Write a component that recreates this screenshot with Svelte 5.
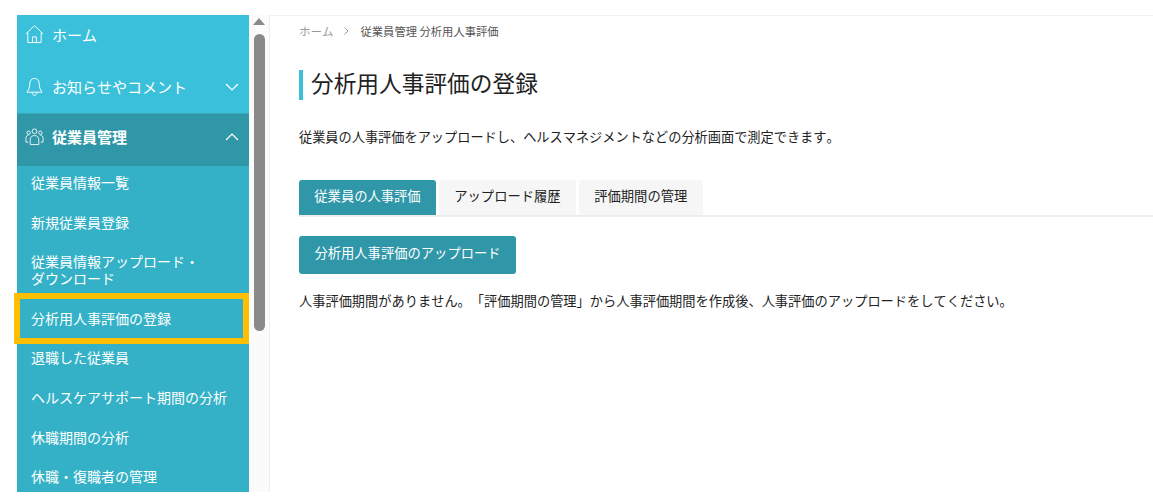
<script>
  const subItems = [
    { label: '従業員情報一覧' },
    { label: '新規従業員登録' },
    { label: '従業員情報アップロード・\nダウンロード' },
    { label: '分析用人事評価の登録', marked: true },
    { label: '退職した従業員' },
    { label: 'ヘルスケアサポート期間の分析' },
    { label: '休職期間の分析' },
    { label: '休職・復職者の管理' }
  ]
  const tabs = ['従業員の人事評価', 'アップロード履歴', '評価期間の管理']
</script>

<div class="page">
  <nav class="sidebar">
    <a class="top home">
      <svg class="icon" viewBox="0 0 20 20" fill="none" stroke="currentColor" stroke-width="1">
        <path d="M1 9.500 8.800 1.600q1.200-1.100 2.400 0L19 9.500M3 8v10.500h14V8M8 18.500v-6h4v6" />
      </svg>
      <span>ホーム</span>
    </a>
    <a class="top notice">
      <svg class="icon" viewBox="0 0 20 20" fill="none" stroke="currentColor" stroke-width="1">
        <path d="M10 1.500c-3.500 0-5 2.800-5 6 0 4-1.500 6.500-3 8.500h16c-1.500-2-3-4.500-3-8.500 0-3.200-1.500-6-5-6zM7.500 16c0 2 1 3.200 2.500 3.200s2.500-1.200 2.500-3.200" />
      </svg>
      <span>お知らせやコメント</span>
      <svg class="chev" viewBox="0 0 14 8" fill="none" stroke="currentColor" stroke-width="1.200"><path d="M1 1l6 6 6-6" /></svg>
    </a>
    <a class="top current">
      <svg class="icon" viewBox="0 0 20 20" fill="none" stroke="currentColor" stroke-width="0.900">
        <circle cx="10" cy="4.500" r="2.500" /><circle cx="3.800" cy="6" r="1.800" /><circle cx="16.200" cy="6" r="1.800" />
        <path d="M5.500 18.500V13c0-2.500 2-4 4.500-4s4.500 1.500 4.500 4v5.500zM3.500 16H1v-4c0-2 1-3.500 3-3.500M16.500 16H19v-4c0-2-1-3.500-3-3.500" />
      </svg>
      <span>従業員管理</span>
      <svg class="chev" viewBox="0 0 14 8" fill="none" stroke="currentColor" stroke-width="1.200"><path d="M1 7l6-6 6 6" /></svg>
    </a>
    <ul class="sub">
      {#each subItems as item}
        <li class:marked={item.marked}>{item.label}</li>
      {/each}
    </ul>
  </nav>

  <div class="scrollbar">
    <div class="arrow"></div>
    <div class="thumb"></div>
  </div>

  <main class="content">
    <div class="crumbs">
      <span class="crumb-home">ホーム</span>
      <svg class="crumb-sep" viewBox="0 0 5 8" fill="none" stroke="currentColor"><path d="M.5.500 4 4 .5 7.500" /></svg>
      <span>従業員管理 分析用人事評価</span>
    </div>
    <h1>分析用人事評価の登録</h1>
    <p class="lead">従業員の人事評価をアップロードし、ヘルスマネジメントなどの分析画面で測定できます。</p>
    <div class="tabs">
      {#each tabs as tab, i}
        <div class="tab" class:active={i === 0}>{tab}</div>
      {/each}
    </div>
    <button class="upload">分析用人事評価のアップロード</button>
    <p class="empty">人事評価期間がありません。「評価期間の管理」から人事評価期間を作成後、人事評価のアップロードをしてください。</p>
  </main>
</div>

<style>
  :global(body) {
    margin: 0;
    background: #fff;
  }

  .page {
    display: flex;
    height: 504px;
    padding: 15px 0 12px 17px;
    box-sizing: border-box;
    overflow: hidden;
    font-family: "Noto Sans CJK JP", "Liberation Sans", sans-serif;
    font-kerning: none;
    text-spacing-trim: space-all;
  }

  .sidebar {
    position: relative;
    width: 232px;
    flex: none;
    background: #34b1c6;
    color: #fff;
  }

  .top {
    display: flex;
    align-items: center;
    padding: 0 10px 0 8px;
    background: #3ac0db;
    font-size: 15px;
  }

  .home {
    height: 45px;
    padding-bottom: 6px;
    box-sizing: border-box;
  }

  .notice { height: 53px; }

  .current {
    height: 53px;
    padding-bottom: 7px;
    background: #3097a9;
    font-weight: 700;
    border-top: 1px solid #35a8bc;
    box-sizing: border-box;
  }

  .icon {
    width: 19px;
    height: 19px;
    margin-right: 8px;
    flex: none;
  }

  .chev {
    width: 14px;
    height: 8px;
    margin-left: auto;
  }

  .sub {
    list-style: none;
    margin: 0;
    padding: 0;
    height: 326px;
    font-size: 14px;
  }

  .sub li {
    padding: 8px 14px 14.600px;
    line-height: 17px;
    white-space: pre-line;
    position: relative;
  }

  /* the orange callout sits over the row */
  .sub li.marked::after {
    content: "";
    position: absolute;
    inset: -8.800px 0 -2.600px -3px;
    border: 6px solid #fdbf00;
  }

  .scrollbar {
    width: 20px;
    flex: none;
    background: #fbfbfb;
    border-right: 1px solid #efefef;
    display: flex;
    flex-direction: column;
    align-items: center;
  }

  .arrow {
    margin-top: 3px;
    width: 0;
    height: 0;
    border-left: 6px solid transparent;
    border-right: 6px solid transparent;
    border-bottom: 7px solid #8a8a8a;
  }

  .thumb {
    margin-top: 9px;
    width: 11px;
    height: 297px;
    background: #8a8a8a;
    border-radius: 6px;
  }

  .content {
    flex: 1;
    min-width: 0;
    border-top: 1px solid #f2f2f2;
    padding: 0 0 0 29px;
  }

  .crumbs {
    display: flex;
    align-items: center;
    height: 30px;
    font-size: 11.300px;
    color: #555;
  }

  .crumb-home {
    color: #999;
    font-size: 11.500px;
  }

  .crumb-sep {
    width: 5px;
    height: 8px;
    margin: 0 12px 0 10px;
    color: #999;
  }

  h1 {
    margin: 24px 0 0;
    padding-left: 8px;
    border-left: 4px solid #3ac0db;
    height: 30px;
    line-height: 25px;
    font-size: 22.700px;
    font-weight: 400;
    color: #222;
  }

  .lead {
    margin: 28px 0 0;
    font-size: 13.200px;
    line-height: 18px;
    color: #222;
  }

  .tabs {
    display: flex;
    gap: 3px;
    margin-top: 34px;
    border-bottom: 2px solid #ececec;
  }

  .tab {
    height: 35px;
    line-height: 32px;
    padding: 0 15.300px;
    background: #f6f6f6;
    border-radius: 3px 3px 0 0;
    font-size: 13.300px;
    color: #222;
  }

  .tab.active {
    background: #3097a9;
    color: #fff;
  }

  .upload {
    display: block;
    margin-top: 19px;
    width: 217px;
    height: 38px;
    border: none;
    border-radius: 3px;
    background: #3097a9;
    color: #fff;
    font: inherit;
    font-size: 13.300px;
    line-height: 31px;
    padding: 0 0 6px;
  }

  .empty {
    margin: 18px 0 0;
    font-size: 13.230px;
    line-height: 18px;
    color: #222;
  }
</style>
